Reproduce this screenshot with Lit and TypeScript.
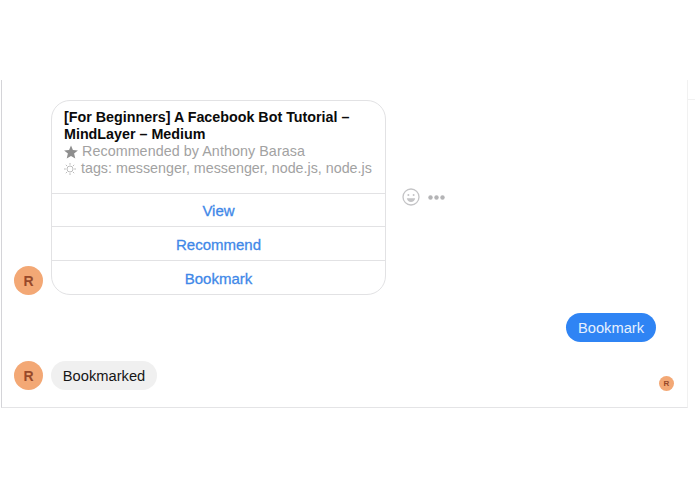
import { LitElement, html, css } from "lit";
import { customElement } from "lit/decorators.js";

const avatar = (cls = "") => html`<div class="avatar ${cls}">R</div>`;

@customElement("app-root")
export class AppRoot extends LitElement {
  static styles = css`
    :host {
      display: block;
      height: 494px;
      padding-top: 80px;
      box-sizing: border-box;
      background: #fff;
      font-family: "Liberation Sans", Arial, sans-serif;
      overflow: hidden;
    }
    .frame {
      position: relative;
      box-sizing: border-box;
      width: 687px;
      height: 328px;
      margin-left: 1px;
      padding: 20px 13px 0 12px;
      border-left: 1px solid #d4d4d8;
      border-right: 1px solid #f1f1f1;
      border-bottom: 1px solid #e4e4e6;
      display: flex;
      flex-direction: column;
    }
    .tick {
      position: absolute;
      top: 19px;
      right: -9px;
      width: 8px;
      height: 1px;
      background: #f1f1f1;
    }
    .row {
      display: flex;
      align-items: flex-end;
      gap: 8px;
    }
    .avatar {
      width: 29px;
      height: 29px;
      flex: none;
      border-radius: 50%;
      background: #f3a875;
      color: #98492a;
      font-size: 14px;
      font-weight: 700;
      display: flex;
      align-items: center;
      justify-content: center;
    }
    .avatar.small {
      width: 15px;
      height: 15px;
      font-size: 8px;
      margin-left: auto;
      margin-bottom: -1px;
    }
    .card {
      box-sizing: border-box;
      width: 335px;
      height: 195px;
      border: 1px solid #e2e2e4;
      border-radius: 19px;
      display: flex;
      flex-direction: column;
    }
    .info {
      height: 92px;
      box-sizing: border-box;
      padding: 8px 12px 0;
      font-size: 14.3px;
      line-height: 17px;
      color: #a2a2a2;
      white-space: nowrap;
    }
    .title {
      color: #0a0a0a;
      font-weight: 700;
      white-space: normal;
      width: 300px;
    }
    .line {
      display: flex;
      align-items: center;
    }
    .line svg {
      display: block;
      flex: none;
    }
    .rec {
      gap: 4px;
      letter-spacing: 0.07px;
    }
    .tags {
      gap: 5px;
    }
    .action {
      height: 34px;
      box-sizing: border-box;
      padding-top: 1px;
      border-top: 1px solid #e2e2e4;
      display: flex;
      align-items: center;
      justify-content: center;
      font-size: 15px;
      color: #3f88e8;
      -webkit-text-stroke: 0.3px #3f88e8;
    }
    .tools {
      align-self: flex-start;
      margin: 88px 0 0 8px;
      display: flex;
      align-items: center;
      gap: 8px;
    }
    .tools svg {
      display: block;
    }
    .out {
      justify-content: flex-end;
      margin-top: 18px;
      padding-right: 18px;
    }
    .pill {
      height: 29px;
      box-sizing: border-box;
      border-radius: 15px;
      display: flex;
      align-items: center;
      font-size: 14.7px;
    }
    .pill.blue {
      width: 90px;
      justify-content: center;
      background: #2f84f4;
      color: #e6f0fe;
    }
    .pill.grey {
      width: 106px;
      justify-content: center;
      background: #f0f0f0;
      color: #161616;
    }
    .last {
      margin-top: 19px;
    }
  `;

  render() {
    return html`
      <div class="frame">
        <div class="tick"></div>
        <div class="row">
          ${avatar()}
          <div class="card">
            <div class="info">
              <div class="title">[For Beginners] A Facebook Bot Tutorial – MindLayer – Medium</div>
              <div class="line rec">
                <svg width="14" height="14" viewBox="0 0 14 14" fill="#8e8e8e">
                  <path d="M7 .5l1.900 4.500 5 .4-3.800 3.200 1.200 4.900L7 10.900l-4.300 2.600 1.200-4.900L.1 5.400l5-.4z" />
                </svg>
                <span>Recommended by Anthony Barasa</span>
              </div>
              <div class="line tags">
                <svg width="12" height="12" viewBox="0 0 12 12" fill="none" stroke="#b4b4b4" stroke-width="0.9">
                  <circle cx="6" cy="6" r="3" />
                  <path d="M6 0v1.800M6 10.200V12M0 6h1.800M10.200 6H12M1.800 1.800l1.200 1.200M9 9l1.200 1.200M1.800 10.200L3 9M9 3l1.200-1.200" />
                </svg>
                <span>tags: messenger, messenger, node.js, node.js</span>
              </div>
            </div>
            <div class="action">View</div>
            <div class="action">Recommend</div>
            <div class="action">Bookmark</div>
          </div>
          <div class="tools">
            <svg width="18" height="18" viewBox="0 0 18 18" fill="none">
              <circle cx="9" cy="9" r="8" stroke="#c4c4c6" stroke-width="1.3" />
              <circle cx="6.4" cy="7" r="1" fill="#c4c4c6" />
              <circle cx="11.6" cy="7" r="1" fill="#c4c4c6" />
              <path d="M4.8 10.2h8.400c-.4 2.400-2 3.800-4.200 3.800s-3.800-1.400-4.200-3.800z" fill="#c4c4c6" />
            </svg>
            <svg width="17" height="5" viewBox="0 0 17 5" fill="#b4b4b6">
              <circle cx="2.5" cy="2.5" r="2.2" />
              <circle cx="8.5" cy="2.5" r="2.2" />
              <circle cx="14.5" cy="2.5" r="2.2" />
            </svg>
          </div>
        </div>
        <div class="row out"><div class="pill blue">Bookmark</div></div>
        <div class="row last">
          ${avatar()}
          <div class="pill grey">Bookmarked</div>
          ${avatar("small")}
        </div>
      </div>
    `;
  }
}
